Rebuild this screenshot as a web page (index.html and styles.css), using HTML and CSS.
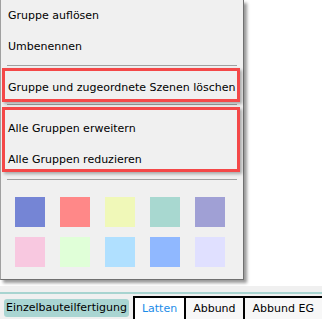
FILE: index.html
```html
<!DOCTYPE html>
<html lang="de">
<head>
    <meta charset="UTF-8">
    <meta name="viewport" content="width=device-width, initial-scale=1.0">
    <title>Gruppenmenü</title>
    <link rel="stylesheet" href="styles.css">
</head>
<body>
    <div class="ctx-menu">
        <div class="menu-item">Gruppe auflösen</div>
        <div class="menu-item">Umbenennen</div>
        <div class="menu-sep sep-a"></div>
        <div class="menu-item">Gruppe und zugeordnete Szenen löschen</div>
        <div class="menu-sep sep-b"></div>
        <div class="menu-item">Alle Gruppen erweitern</div>
        <div class="menu-item item-last">Alle Gruppen reduzieren</div>
        <div class="menu-sep sep-c"></div>
        <div class="swatches">
            <div class="swatch sw-blue"></div>
            <div class="swatch sw-red"></div>
            <div class="swatch sw-yellow"></div>
            <div class="swatch sw-teal"></div>
            <div class="swatch sw-violet"></div>
            <div class="swatch sw-pink"></div>
            <div class="swatch sw-green"></div>
            <div class="swatch sw-sky"></div>
            <div class="swatch sw-azure"></div>
            <div class="swatch sw-lilac"></div>
        </div>
        <div class="mark mark-one"></div>
        <div class="mark mark-two"></div>
    </div>
    <div class="tab-bar">
        <div class="tab-line"></div>
        <div class="tabs">
            <span class="tab tab-active">Einzelbauteilfertigung</span>
            <span class="tab tab-framed tab-hover">Latten</span>
            <span class="tab tab-framed">Abbund</span>
            <span class="tab tab-framed tab-end">Abbund EG</span>
        </div>
    </div>
</body>
</html>
```

FILE: styles.css
```css
body {
    margin: 0;
    background: #fff;
    font-family: "DejaVu Sans", Verdana, sans-serif;
    font-size: 11px;
    color: #000;
    overflow: hidden;
}
.ctx-menu {
    position: relative;
    width: 242px;
    background: #f0f0f0;
    border-left: 1px solid #a0a0a0;
    border-right: 1px solid #707070;
    border-bottom: 1px solid #707070;
    box-shadow: 3px 3px 3px rgba(0,0,0,0.4);
    padding-bottom: 12px;
}
.menu-item {
    line-height: 31px;
    padding-left: 7px;
    white-space: nowrap;
}
.item-last {
    line-height: 32px;
}
.menu-sep {
    height: 1px;
    background: #a0a0a0;
    margin: 0 6px;
}
.sep-a {
    margin-top: 3px;
    margin-bottom: 6px;
}
.sep-b {
    margin-top: 1px;
    margin-bottom: 8px;
}
.sep-c {
    margin-top: 3px;
    margin-bottom: 17px;
}
.swatches {
    display: grid;
    grid-template-columns: repeat(5, 30px);
    grid-auto-rows: 30px;
    column-gap: 15px;
    row-gap: 10px;
    padding-left: 14px;
}
.sw-blue { background: #7585d5; }
.sw-red { background: #ff8888; }
.sw-yellow { background: #f0f8b8; }
.sw-teal { background: #a8d8d0; }
.sw-violet { background: #a0a0d5; }
.sw-pink { background: #f8c8e0; }
.sw-green { background: #e0ffd8; }
.sw-sky { background: #b0e0ff; }
.sw-azure { background: #90b8ff; }
.sw-lilac { background: #e0e0ff; }
.mark {
    position: absolute;
    left: 1px;
    width: 232px;
    border: 3px solid #f44848;
    box-shadow: 2px 2px 3px rgba(0,0,0,0.3);
}
.mark-one {
    top: 68px;
    height: 28px;
}
.mark-two {
    top: 107px;
    height: 59px;
}
.tab-bar {
    margin-top: 6px;
    background: #f0f0f0;
    padding-top: 6px;
}
.tab-line {
    height: 2px;
    background: #a8d4d0;
}
.tabs {
    display: flex;
    align-items: flex-end;
    height: 25px;
    padding-left: 4px;
    border-bottom: 1px solid #d4d4d4;
}
.tab {
    white-space: nowrap;
}
.tab-active {
    background: #a9d5d2;
    border-radius: 3px;
    padding: 0 2px;
    line-height: 18px;
    margin-bottom: 2px;
    margin-right: 4px;
}
.tab-framed {
    background: #f7f7f7;
    border-top: 2px solid #000;
    border-left: 2px solid #000;
    padding: 0 7px;
    line-height: 21px;
}
.tab-hover {
    background: #fff;
    color: #1b8ce8;
}
.tab-end {
    border-right: 2px solid #000;
    padding: 0 8px;
}
```
